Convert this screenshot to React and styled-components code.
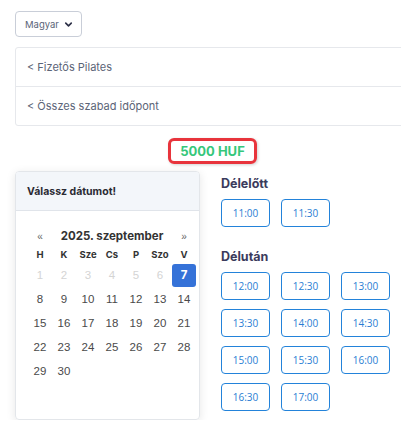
import React from "react";
import styled, { createGlobalStyle } from "styled-components";
import { ChevronDown } from "lucide-react";

const Global = createGlobalStyle`
  body {
    margin: 0;
    background: #fff;
    font-family: Inter, "Noto Sans", sans-serif;
    overflow: hidden;
  }
`;

const Page = styled.div`
  width: 395px;
  padding: 11px 0 0 15px;
`;

const Select = styled.div`
  width: 67px;
  height: 26px;
  box-sizing: border-box;
  border: 1px solid #c9ced8;
  border-radius: 4px;
  display: flex;
  align-items: center;
  justify-content: space-between;
  padding: 0 7px 0 9px;
  font-size: 9.5px;
  color: #5a6478;
`;

const List = styled.div`
  margin-top: 10px;
  border: 1px solid #e6e8ec;
  border-radius: 3px;
`;

const Row = styled.div`
  height: 38px;
  display: flex;
  align-items: center;
  padding-left: 11px;
  font-size: 11px;
  color: #5b6477;
  & + & {
    border-top: 1px solid #e6e8ec;
  }
`;

const PriceWrap = styled.div`
  display: flex;
  justify-content: center;
  margin-top: 12px;
`;

const Price = styled.div`
  height: 26px;
  box-sizing: border-box;
  padding: 0 9px;
  border: 3px solid #e8343c;
  border-radius: 6px;
  display: flex;
  align-items: center;
  font-size: 13px;
  font-weight: 700;
  color: #35c77a;
  box-shadow: 1px 1px 3px rgba(0, 0, 0, 0.18);
`;

const Main = styled.div`
  display: flex;
  gap: 21px;
  margin-top: 7px;
`;

const Card = styled.div`
  width: 185px;
  box-sizing: border-box;
  border: 1px solid #e3e6ea;
  border-radius: 4px;
  box-shadow: 0 2px 10px rgba(0, 0, 0, 0.1);
  overflow: hidden;
`;

const CardHead = styled.div`
  height: 38px;
  background: #f3f6fa;
  border-bottom: 1px solid #e0e4ea;
  display: flex;
  align-items: center;
  padding-left: 11px;
  font-size: 10.5px;
  font-weight: 700;
  color: #2a2a33;
`;

const CardBody = styled.div`
  padding: 16px 3px 36px 12px;
  font-family: "Liberation Sans", Arial, sans-serif;
`;

const Nav = styled.div`
  height: 18px;
  display: grid;
  grid-template-columns: 24px 1fr 24px;
  align-items: center;
  text-align: center;
  width: 168px;
`;

const Arrow = styled.span`
  font-size: 10px;
  color: #666;
`;

const Title = styled.span`
  font-family: Inter, sans-serif;
  font-size: 11.5px;
  font-weight: 700;
  color: #333;
`;

const Grid = styled.div`
  display: grid;
  grid-template-columns: repeat(7, 24px);
  grid-template-rows: 18px;
  grid-auto-rows: 24px;
  align-items: center;
  justify-items: center;
`;

const WeekDay = styled.div`
  font-family: Inter, sans-serif;
  font-size: 9.5px;
  font-weight: 700;
  color: #333;
`;

const Day = styled.div`
  width: 24px;
  height: 23px;
  border-radius: 3px;
  display: flex;
  align-items: center;
  justify-content: center;
  font-size: 11.5px;
  color: ${(p) => (p.$off ? "#d4d4d4" : p.$active ? "#fff" : "#4a4a4a")};
  background: ${(p) => (p.$active ? "#3572d8" : "transparent")};
  font-weight: ${(p) => (p.$active ? 700 : 400)};
  font-family: ${(p) => (p.$active ? "Inter, sans-serif" : "inherit")};
`;

const Slots = styled.div`
  padding-top: 4px;
`;

const Heading = styled.div`
  font-size: 12.5px;
  font-weight: 700;
  color: #3b3b5c;
  margin-top: ${(p) => p.$top || 0}px;
  line-height: 18px;
`;

const Buttons = styled.div`
  display: grid;
  grid-template-columns: repeat(3, 49px);
  column-gap: 11px;
  row-gap: 9px;
  margin-top: 6px;
`;

const Slot = styled.button`
  height: 28px;
  padding: 0;
  background: #fff;
  border: 1px solid #2383da;
  border-radius: 4px;
  font-family: "Open Sans", sans-serif;
  font-size: 10px;
  color: #2a7ed3;
`;

const weekDays = ["H", "K", "Sze", "Cs", "P", "Szo", "V"];

export default function App() {
  const days = [];
  for (let d = 1; d <= 30; d++) days.push(d);
  return (
    <Page>
      <Global />
      <Select>
        <span>Magyar</span>
        <ChevronDown size={11} strokeWidth={3.5} color="#2d3047" />
      </Select>
      <List>
        <Row>&lt; Fizetős Pilates</Row>
        <Row>&lt; Összes szabad időpont</Row>
      </List>
      <PriceWrap>
        <Price>5000 HUF</Price>
      </PriceWrap>
      <Main>
        <Card>
          <CardHead>Válassz dátumot!</CardHead>
          <CardBody>
            <Nav>
              <Arrow>«</Arrow>
              <Title>2025. szeptember</Title>
              <Arrow>»</Arrow>
            </Nav>
            <Grid>
              {weekDays.map((w) => (
                <WeekDay key={w}>{w}</WeekDay>
              ))}
              {days.map((d) => (
                <Day key={d} $off={d < 7} $active={d === 7}>
                  {d}
                </Day>
              ))}
            </Grid>
          </CardBody>
        </Card>
        <Slots>
          <Heading>Délelőtt</Heading>
          <Buttons>
            {["11:00", "11:30"].map((t) => (
              <Slot key={t}>{t}</Slot>
            ))}
          </Buttons>
          <Heading $top={21}>Délután</Heading>
          <Buttons>
            {[
              "12:00", "12:30", "13:00", "13:30", "14:00", "14:30",
              "15:00", "15:30", "16:00", "16:30", "17:00",
            ].map((t) => (
              <Slot key={t}>{t}</Slot>
            ))}
          </Buttons>
        </Slots>
      </Main>
    </Page>
  );
}
